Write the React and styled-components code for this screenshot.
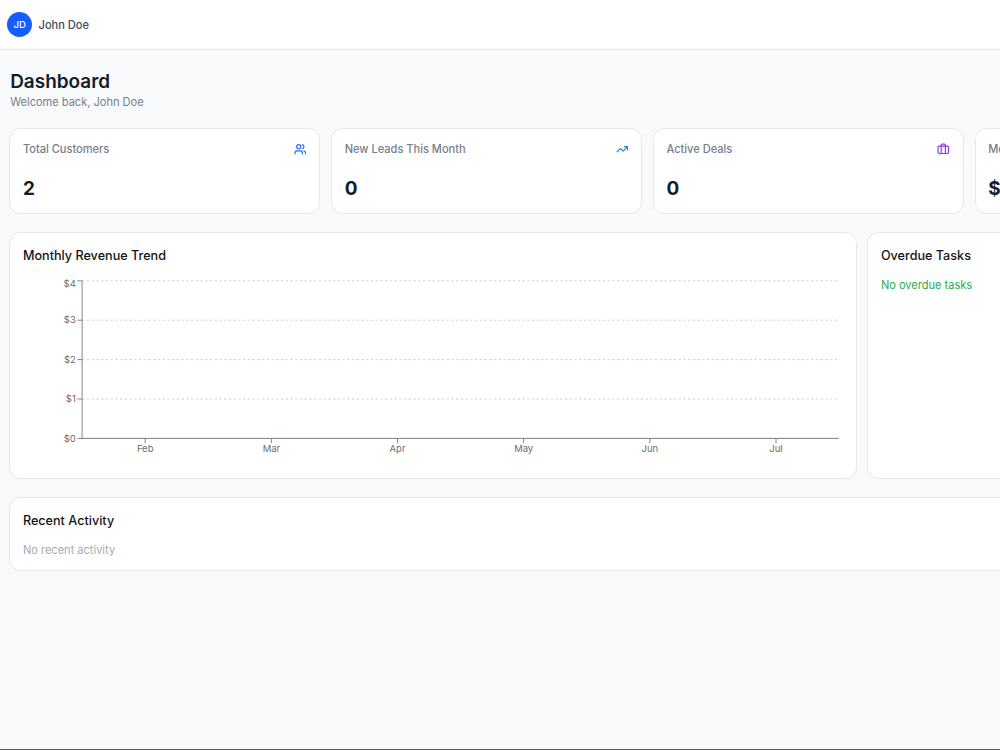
import React from 'react';
import styled, { createGlobalStyle } from 'styled-components';
import { Users, TrendingUp } from 'lucide-react';

const GlobalStyle = createGlobalStyle`
  * { box-sizing: border-box; }
  html, body { margin: 0; overflow: hidden; }
  body { font-family: Inter, "Liberation Sans", sans-serif; background: #f9fafb; color: #0a0a0a; }
  h1, h2, p { margin: 0; }
`;

const Page = styled.div`
  width: 1000px;
  height: 750px;
  overflow: hidden;
  display: flex;
  flex-direction: column;
  background: #f9fafc;
  border-bottom: 1px solid #5d6065;
`;

const TopBar = styled.header`
  flex: none;
  height: 50px;
  display: flex;
  align-items: center;
  gap: 6.3px;
  padding: 0 7px;
  background: #fff;
  border-bottom: 1px solid #e5e7eb;
`;

const Avatar = styled.div`
  width: 25.3px;
  height: 25.3px;
  border-radius: 50%;
  background: #155dfc;
  color: #fff;
  display: flex;
  align-items: center;
  justify-content: center;
  font-size: 9.5px;
  font-weight: 500;
`;

const UserName = styled.span`
  font-size: 11.05px;
  font-weight: 500;
  color: #414b5b;
`;

const Main = styled.main`
  width: 1298px;
  padding: 18.7px 9.4px 0;
  display: flex;
  flex-direction: column;
`;

const Title = styled.h1`
  font-size: 18.95px;
  line-height: 25px;
  font-weight: 600;
  color: #151c2b;
  padding-left: 0.8px;
`;

const Subtitle = styled.p`
  font-size: 11.05px;
  line-height: 16px;
  color: #777e8c;
  padding-left: 0.8px;
`;

const Card = styled.section`
  background: #fff;
  border: 1px solid #e5e7eb;
  border-radius: 11.5px;
  padding: 12.5px;
`;

const Stats = styled.div`
  display: grid;
  grid-template-columns: repeat(4, 310.6px);
  gap: 11.2px;
  margin-top: 18px;
`;

const StatCard = styled(Card)`
  height: 86.7px;
`;

const StatHead = styled.div`
  display: flex;
  justify-content: space-between;
  align-items: center;
  height: 16px;
`;

const StatLabel = styled.span`
  font-size: 11.05px;
  font-weight: 500;
  color: #777e8c;
`;

const StatValue = styled.div`
  margin-top: 18.5px;
  font-size: 18.95px;
  line-height: 25px;
  font-weight: 700;
  color: #151c2b;
`;

const Panels = styled.div`
  display: grid;
  grid-template-columns: 847.3px 425px;
  gap: 10.7px;
  margin-top: 17.8px;
`;

const Panel = styled(Card)`
  height: 247.2px;
`;

const PanelTitle = styled.h2`
  font-size: 12.63px;
  line-height: 19px;
  font-weight: 500;
  color: #141414;
`;

const Note = styled.p`
  font-size: 11.05px;
  line-height: 16px;
  margin-top: 12px;
  color: ${(p) => p.$color};
`;

const Activity = styled(Card)`
  margin-top: 17.8px;
  height: 74px;
`;

const Chart = styled.svg`
  display: block;
  margin-top: 10px;
  width: 820px;
  height: 190px;
  text { font-size: 9.47px; fill: #6c6c6c; }
`;

function SuitcaseIcon() {
  return (
    <svg width="12.6" height="12.6" viewBox="0 0 24 24" fill="none" stroke="#9333ea" strokeWidth="2.2" strokeLinecap="round" strokeLinejoin="round">
      <path d="M16 20V4a2 2 0 0 0-2-2h-4a2 2 0 0 0-2 2v16" />
      <rect width="20" height="14" x="2" y="6" rx="2" />
    </svg>
  );
}

const stats = [
  { label: 'Total Customers', value: '2', icon: <Users size={12.6} strokeWidth={2.2} color="#2f6be8" /> },
  { label: 'New Leads This Month', value: '0', icon: <TrendingUp size={12.6} strokeWidth={2.2} color="#2487c4" /> },
  { label: 'Active Deals', value: '0', icon: <SuitcaseIcon /> },
  { label: 'Monthly Revenue', value: '$0', icon: null },
];

const months = ['Feb', 'Mar', 'Apr', 'May', 'Jun', 'Jul'];
const LEFT = 59.1;
const RIGHT = 816.1;
const TOP = 5.8;
const STEP = 39.4;
const BOTTOM = TOP + STEP * 4;

function RevenueChart() {
  return (
    <Chart viewBox="0 0 820 190">
      {[4, 3, 2, 1, 0].map((v, i) => {
        const y = TOP + i * STEP;
        return (
          <g key={v}>
            <line x1={LEFT} x2={RIGHT} y1={y} y2={y} stroke="#ccc" strokeWidth="0.9" strokeDasharray="2.367 2.367" />
            <line x1={LEFT - 4.74} x2={LEFT} y1={y} y2={y} stroke="#666" strokeWidth="0.79" />
            <text x={LEFT - 6.3} y={y + (i === 0 ? 6.2 : 3.2)} textAnchor="end">{`$${v}`}</text>
          </g>
        );
      })}
      <line x1={LEFT} x2={LEFT} y1={TOP} y2={BOTTOM} stroke="#666" strokeWidth="0.79" />
      <line x1={LEFT} x2={RIGHT} y1={BOTTOM} y2={BOTTOM} stroke="#666" strokeWidth="0.79" />
      {months.map((m, i) => {
        const x = LEFT + ((RIGHT - LEFT) / 6) * (i + 0.5);
        return (
          <g key={m}>
            <line x1={x} x2={x} y1={BOTTOM} y2={BOTTOM + 4.74} stroke="#666" strokeWidth="0.79" />
            <text x={x} y={BOTTOM + 13.3} textAnchor="middle">{m}</text>
          </g>
        );
      })}
    </Chart>
  );
}

export default function App() {
  return (
    <>
      <GlobalStyle />
      <Page>
        <TopBar>
          <Avatar>JD</Avatar>
          <UserName>John Doe</UserName>
        </TopBar>
        <Main>
          <Title>Dashboard</Title>
          <Subtitle>Welcome back, John Doe</Subtitle>
          <Stats>
            {stats.map((s) => (
              <StatCard key={s.label}>
                <StatHead>
                  <StatLabel>{s.label}</StatLabel>
                  {s.icon}
                </StatHead>
                <StatValue>{s.value}</StatValue>
              </StatCard>
            ))}
          </Stats>
          <Panels>
            <Panel>
              <PanelTitle>Monthly Revenue Trend</PanelTitle>
              <RevenueChart />
            </Panel>
            <Panel>
              <PanelTitle>Overdue Tasks</PanelTitle>
              <Note $color="#1fae55">No overdue tasks</Note>
            </Panel>
          </Panels>
          <Activity>
            <PanelTitle>Recent Activity</PanelTitle>
            <Note $color="#a3aab6">No recent activity</Note>
          </Activity>
        </Main>
      </Page>
    </>
  );
}
